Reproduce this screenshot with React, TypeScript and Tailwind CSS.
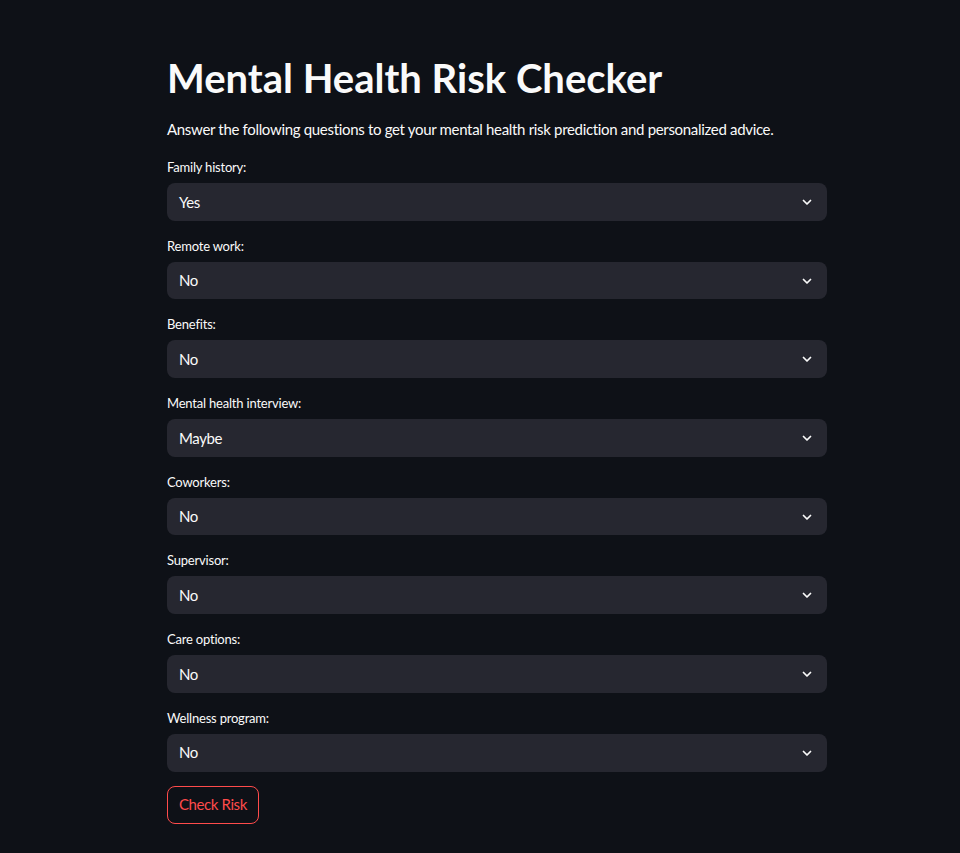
import { useState } from "react";

const questions: { label: string; value: string }[] = [
  { label: "Family history:", value: "Yes" },
  { label: "Remote work:", value: "No" },
  { label: "Benefits:", value: "No" },
  { label: "Mental health interview:", value: "Maybe" },
  { label: "Coworkers:", value: "No" },
  { label: "Supervisor:", value: "No" },
  { label: "Care options:", value: "No" },
  { label: "Wellness program:", value: "No" },
];

const Chevron = () => (
  <svg width="12" height="12" viewBox="0 0 24 24" fill="none" stroke="#fafafa" strokeWidth="3.5" strokeLinecap="round" strokeLinejoin="round">
    <path d="M5 9l7 7 7-7" />
  </svg>
);

const App = () => {
  const [answers] = useState(questions);

  return (
    <div className="min-h-[853px] w-full bg-[#0e1117] text-[#fafafa] font-['Lato','Noto_Sans',sans-serif]">
      <div className="w-[660px] ml-[167px] pt-[56px] pb-[29px]">
        <h1 className="text-[40px] leading-[44px] font-bold">Mental Health Risk Checker</h1>
        <p className="mt-[18px] text-[15px] leading-[22px] tracking-[-0.32px] whitespace-nowrap">
          Answer the following questions to get your mental health risk prediction and personalized advice.
        </p>
        <div className="mt-[19px] flex flex-col gap-[17px]">
          {answers.map((q) => (
            <div key={q.label} className="flex flex-col">
              <label className="text-[13px] leading-[16px] tracking-[-0.2px]">{q.label}</label>
              <div className="mt-[8px] h-[37.7px] rounded-[8px] bg-[#262730] flex items-center justify-between pl-[12px] pr-[14px] text-[15px] tracking-[-0.4px]">
                <span>{q.value}</span>
                <Chevron />
              </div>
            </div>
          ))}
        </div>
        <button className="mt-[14px] h-[38px] px-[11px] rounded-[8px] border border-[#ff4b4b] text-[#ff4b4b] text-[15px] tracking-[-0.4px] leading-none">
          Check Risk
        </button>
      </div>
    </div>
  );
};

export default App;
